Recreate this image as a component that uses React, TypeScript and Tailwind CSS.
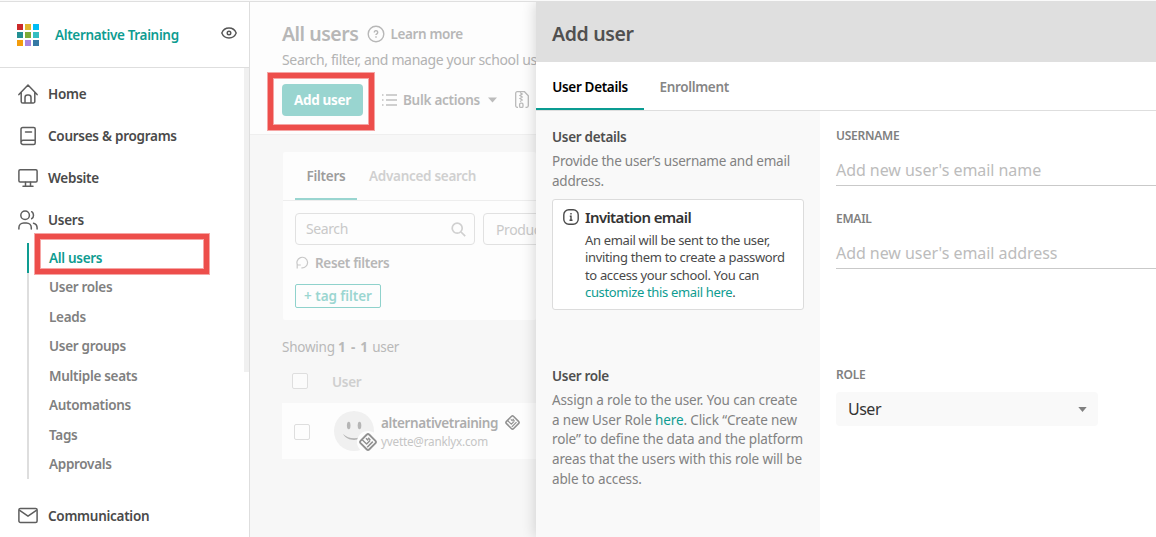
import React from "react";

const NAV = "flex h-[42px] items-center pl-[18px] gap-[10px] text-[13.500px] font-semibold text-[#4a4a4a] tracking-[-0.27px]";

const HomeIcon = () => (
  <svg width="20" height="20" viewBox="0 0 20 20" fill="none" stroke="#5e5e5e" strokeWidth="1.500" strokeLinecap="round" strokeLinejoin="round">
    <path d="M.9 10.600 10 1.100l9.100 9.500M3.200 8.600V17.400a1.600 1.600 0 0 0 1.600 1.600h10.400a1.600 1.600 0 0 0 1.600-1.600V8.600M7 19v-5.600a2.400 2.400 0 0 1 2.400-2.400h1.200a2.400 2.400 0 0 1 2.400 2.400V19" />
  </svg>
);
const BookIcon = () => (
  <svg width="20" height="20" viewBox="0 0 20 20" fill="none" stroke="#5e5e5e" strokeWidth="1.500" strokeLinecap="round">
    <path d="M3 16.200V3.300A1.800 1.800 0 0 1 4.800 1.500H15.700a1.500 1.500 0 0 1 1.500 1.500V17a1.500 1.500 0 0 1-1.500 1.500H5a2 2 0 0 1-2-2.200 2 2 0 0 1 2-2H17M7.500 6h6" />
  </svg>
);
const MonitorIcon = () => (
  <svg width="20" height="20" viewBox="0 0 20 20" fill="none" stroke="#5e5e5e" strokeWidth="1.500" strokeLinecap="round">
    <rect x=".9" y="1.800" width="18.200" height="12.200" rx="1.200" />
    <path d="M7.500 14.200v3.600M12.500 14.200v3.600M5 18.200h10" />
  </svg>
);
const UsersIcon = () => (
  <svg width="20" height="20" viewBox="0 0 20 20" fill="none" stroke="#5e5e5e" strokeWidth="1.500" strokeLinecap="round">
    <circle cx="7.100" cy="5.300" r="4.300" />
    <path d="M13.700 1.700a4.300 4.300 0 0 1 0 7M.9 18.900v-1.200a4.800 4.800 0 0 1 4.800-4.800h2.800a4.800 4.800 0 0 1 4.800 4.800v1.200M15.500 13.200a4.800 4.800 0 0 1 3.600 4.500v1.200" />
  </svg>
);
const MailIcon = () => (
  <svg width="20" height="20" viewBox="0 0 20 20" fill="none" stroke="#5e5e5e" strokeWidth="1.500" strokeLinejoin="round">
    <rect x=".9" y="2.500" width="18.200" height="14" rx="1.500" />
    <path d="m1.300 4.200 8.700 6 8.700-6" />
  </svg>
);
const EyeIcon = () => (
  <svg width="16" height="12" viewBox="0 0 16 12" fill="none" stroke="#555" strokeWidth="1.400">
    <path d="M.8 6C2 3 4.800 1 8 1s6 2 7.200 5C14 9 11.200 11 8 11S2 9 .8 6Z" />
    <circle cx="8" cy="6" r="1.800" />
  </svg>
);
const Diamond = ({ size }: { size: number }) => (
  <svg width={size} height={size} viewBox="0 0 18 18" fill="none" stroke="#919191" strokeWidth="1.900" strokeLinejoin="round">
    <path d="M7.900 1.500a1.500 1.500 0 0 1 2.200 0l6.400 6.400a1.500 1.500 0 0 1 0 2.200l-6.400 6.400a1.500 1.500 0 0 1-2.200 0L1.500 10.100a1.500 1.500 0 0 1 0-2.200Z" />
    <path d="M3.200 6.800 7.600 11 11.300 7.300M7 5.200 9.200 7.400M8.200 14.200 13.800 8.600M9.200 4.700 11.300 7.300" strokeWidth="1.500" />
  </svg>
);

const LOGO = ["bg-[#cb2a2a]", "bg-[#e0b62e]", "bg-[#00bdf5]", "bg-[#239093]", "bg-[#7cab37]", "bg-[#35bec0]", "bg-[#f39c0c]", "bg-[#a884e0]", "bg-[#3578a4]"];
const SUB = ["User roles", "Leads", "User groups", "Multiple seats", "Automations", "Tags", "Approvals"];

function NavItem({ icon, label }: { icon: React.ReactNode; label: string }) {
  return (
    <div className={NAV}>
      {icon}
      <span className="pt-[1px]">{label}</span>
    </div>
  );
}

function Sidebar() {
  return (
    <aside className="flex w-[250px] shrink-0 flex-col border-r border-[#dedede] bg-white">
      <div className="flex h-[66px] shrink-0 items-center border-b border-[#dedede] pl-[17px] pr-[12px]">
        <div className="grid grid-cols-3 gap-[2px]">
          {LOGO.map((c) => (
            <span key={c} className={`size-[6px] ${c}`} />
          ))}
        </div>
        <span className="ml-[16px] mt-[2px] text-[13.500px] font-semibold tracking-[-0.34px] text-[#0e9c91]">Alternative Training</span>
        <span className="ml-auto mb-[3px]"><EyeIcon /></span>
      </div>
      <div className="flex grow">
        <nav className="grow pt-[5px]">
          <NavItem icon={<HomeIcon />} label="Home" />
          <NavItem icon={<BookIcon />} label="Courses &amp; programs" />
          <NavItem icon={<MonitorIcon />} label="Website" />
          <NavItem icon={<UsersIcon />} label="Users" />
          <ul className="ml-[27px] mt-[2px] text-[13.500px] font-semibold tracking-[-0.3px] text-[#808080]">
            <li className="flex h-[29.500px] items-center border-l-2 border-[#0e9c91] pl-[20px] pt-[1px] text-[#0e9c91]">All users</li>
            {SUB.map((s) => (
              <li key={s} className="flex h-[29.500px] items-center border-l-2 border-[#dedede] pl-[20px] pt-[0.500px]">{s}</li>
            ))}
          </ul>
          <div className="mt-[16px]"><NavItem icon={<MailIcon />} label="Communication" /></div>
        </nav>
        <div className="h-[304px] w-[5px] bg-[#f0f0f0]" />
      </div>
    </aside>
  );
}

function UsersPage() {
  return (
    <main className="flex w-[286px] shrink-0 flex-col overflow-hidden bg-[#f7f7f7] whitespace-nowrap">
      <header className="flex h-[133px] shrink-0 flex-col border-b border-[#efefef] bg-[#fdfdfd] pl-[32px] pt-[18px]">
        <div className="flex h-[28px] items-center">
          <h1 className="w-[76px] text-[19.500px] font-semibold tracking-[-0.5px] text-[#b7b7b7]">All users</h1>
          <svg className="ml-[9px] mb-[1px]" width="18" height="18" viewBox="0 0 18 18" fill="none" stroke="#b7b7b7" strokeWidth="1.400">
            <circle cx="9" cy="9" r="7.800" />
            <path d="M7.300 7.400a1.700 1.700 0 1 1 2.600 1.400c-.6.400-.9.600-.9 1.200M9 11.200v1.500" />
          </svg>
          <span className="ml-[5.500px] text-[13.500px] font-semibold tracking-[-0.36px] text-[#b7b7b7]">Learn more</span>
        </div>
        <p className="mt-[2px] h-[20px] text-[14px] leading-[20px] tracking-[-0.35px] text-[#b3b3b3]">Search, filter, and manage your school us</p>
        <div className="mt-[14px] flex h-[32px] items-center">
          <button className="h-[32px] w-[81px] shrink-0 rounded-[4px] bg-[#99d5d0] text-[13.500px] font-bold tracking-[-0.300px] text-white">Add user</button>
          <svg className="ml-[19px] shrink-0" width="15" height="12" viewBox="0 0 15 12" stroke="#c0c0c0" strokeWidth="1.600">
            <path d="M4 1h11M4 6h11M4 11h11M0 1h1.500M0 6h1.500M0 11h1.500" />
          </svg>
          <span className="ml-[6px] text-[13.500px] font-semibold tracking-[-0.28px] text-[#b7b7b7]">Bulk actions</span>
          <svg className="ml-[8px] shrink-0" width="9" height="6" viewBox="0 0 9 6"><path d="M0 .5h9L4.500 5.500Z" fill="#bcbcbc" /></svg>
          <svg className="ml-[18px] shrink-0" width="14" height="18" viewBox="0 0 14 18" fill="none" stroke="#b9b9b9" strokeWidth="1.300">
            <path d="M3 16.300H2.200A1.500 1.500 0 0 1 .7 14.800V2.200A1.500 1.500 0 0 1 2.200.7H9.500l3.800 4v10.100a1.500 1.500 0 0 1-1.500 1.500H10.500" />
            <path d="m5 1.500 2.200 1.500L5 4.500l2.200 1.500L5 7.500l2.200 1.500L5 10.500" />
            <rect x="4.600" y="12.200" width="3.400" height="4.200" rx="1.200" />
          </svg>
        </div>
      </header>
      <section className="ml-[33px] mt-[17px] flex h-[168px] shrink-0 flex-col rounded-[2px] bg-[#fdfdfd]">
        <div className="flex h-[49px] border-b border-[#ededed] pl-[12px] text-[13.500px] font-semibold leading-[48px]">
          <span className="h-[48px] w-[62px] border-b-2 border-[#99d5d0] text-center tracking-[-0.25px] text-[#9c9c9c]">Filters</span>
          <span className="ml-[12px] tracking-[-0.29px] text-[#d0d0d0]">Advanced search</span>
        </div>
        <div className="ml-[12px] mt-[12px] flex h-[32px] shrink-0 gap-[8px] text-[14px] tracking-[-0.4px] text-[#c9c9c9]">
          <div className="flex w-[180px] shrink-0 items-center justify-between rounded-[4px] border border-[#e1e1e1] pl-[10px] pr-[8px]">
            <span className="pb-[1px]">Search</span>
            <svg width="15" height="15" viewBox="0 0 15 15" fill="none" stroke="#d0d0d0" strokeWidth="1.700"><circle cx="6.200" cy="6.200" r="5" /><path d="m10 10 4.200 4.200" /></svg>
          </div>
          <div className="flex w-[180px] shrink-0 items-center rounded-[4px] border border-[#e1e1e1] pl-[12px]">Product</div>
        </div>
        <div className="ml-[13px] mt-[8px] flex h-[20px] items-center text-[13.500px] font-semibold tracking-[-0.33px] text-[#b7b7b7]">
          <svg className="mb-[2px]" width="13" height="13" viewBox="0 0 13 13" fill="none" stroke="#c8c8c8" strokeWidth="1.200"><path d="M1.900 9.600A5.300 5.300 0 1 1 5.400 11.800M1.200 12.500V9h3.600" /></svg>
          <span className="ml-[6px] pt-[1px]">Reset filters</span>
        </div>
        <button className="ml-[12px] mt-[11px] h-[24px] w-[86px] rounded-[2px] border border-[#8fd2cc] text-[13.500px] font-semibold leading-[22px] tracking-[-0.05px] text-[#9bd6d1]">+ tag filter</button>
      </section>
      <p className="ml-[32px] mt-[17px] h-[20px] text-[13.500px] leading-[20px] tracking-[-0.23px] text-[#b9b9b9]">
        Showing <b className="font-bold tracking-[0.800px]">1 - 1</b> user
      </p>
      <div className="ml-[42px] mt-[14px] flex h-[20px] items-center">
        <span className="size-[16px] rounded-[2px] border border-[#dedede] bg-[#fbfbfb]" />
        <span className="ml-[24px] pt-[2px] text-[13.500px] font-semibold tracking-[-0.3px] text-[#cfcfcf]">User</span>
      </div>
      <div className="ml-[32px] mt-[12px] flex h-[56px] shrink-0 items-center bg-[#fdfdfd] pl-[12px]">
        <span className="mt-[2px] size-[16px] shrink-0 rounded-[2px] border border-[#dedede] bg-[#fdfdfd]" />
        <div className="relative ml-[24px] size-[40px] shrink-0 rounded-full bg-[#f0f0f0]">
          <svg width="40" height="40" viewBox="0 0 40 40" fill="#b5b5b5">
            <ellipse cx="14.700" cy="14.500" rx="1.800" ry="3.800" />
            <ellipse cx="25.500" cy="14.500" rx="1.800" ry="3.800" />
            <path d="M9 23c5.500 5.200 14.500 5.700 22 1-5.500 6.500-17 7-22-1Z" />
          </svg>
          <span className="absolute left-[23px] top-[20px] flex size-[22px] items-center justify-center rounded-full bg-[#fdfdfd]"><Diamond size={18} /></span>
        </div>
        <div className="ml-[7px] pt-[2px]">
          <div className="flex h-[18px] items-center text-[13.500px] font-semibold tracking-[-0.38px] text-[#adadad]">
            alternativetraining <span className="mb-[2px] ml-[7px]"><Diamond size={15} /></span>
          </div>
          <div className="h-[17px] text-[11.700px] leading-[17px] tracking-[-0.2px] text-[#c5c5c5]">yvette@ranklyx.com</div>
        </div>
      </div>
    </main>
  );
}

const LABEL = "text-[12px] leading-[16px] font-semibold tracking-[-0.25px] text-[#808080]";
const FIELD = "h-[32px] border-b border-[#c9c9c9] text-[16px] leading-[32px] tracking-[-0.05px] text-[#bcbcbc]";

function AddUserPanel() {
  return (
    <section className="z-10 flex grow flex-col bg-white whitespace-nowrap shadow-[-2px_0_12px_rgba(0,0,0,0.14)]">
      <h2 className="h-[60px] shrink-0 bg-[#dfdfdf] pl-[16px] text-[19.500px] font-semibold leading-[64px] tracking-[-0.36px] text-[#505050]">Add user</h2>
      <div className="flex h-[49px] shrink-0 border-b border-[#dedede] text-[13.500px] font-semibold leading-[50px]">
        <span className="h-[48px] w-[108px] border-b-2 border-[#0a9c92] text-center tracking-[-0.33px] text-black">User Details</span>
        <span className="ml-[15.500px] tracking-[-0.33px] text-[#868686]">Enrollment</span>
      </div>
      <div className="flex grow">
        <div className="w-[284px] shrink-0 bg-[#f9f9f9] pl-[16px] pt-[16px] text-[13.500px] text-[#828282]">
          <h3 className="h-[20px] font-semibold leading-[20px] tracking-[-0.3px] text-[#4f4f4f]">User details</h3>
          <p className="mt-[5px] leading-[19.500px] tracking-[-0.22px]">Provide the user’s username and email<br />address.</p>
          <div className="mt-[8px] flex h-[111px] w-[252px] rounded-[3px] border border-[#dcdcdc] bg-white pl-[10px] pt-[8px]">
            <svg className="mt-[1px] shrink-0" width="16" height="16" viewBox="0 0 16 16" fill="none" stroke="#4a4a4a" strokeWidth="1.400"><rect x=".8" y=".8" width="14.400" height="14.400" rx="5" /><path d="M8 4v1.600M6.800 7.300H8v3.900M6.500 11.300h3" /></svg>
            <div className="ml-[6px]">
              <h4 className="h-[20px] text-[15px] font-semibold leading-[19px] tracking-[-0.62px] text-[#333]">Invitation email</h4>
              <p className="mt-[4px] text-[13px] leading-[17.300px] tracking-[-0.34px] text-[#4a4a4a]">
                An email will be sent to the user,<br />inviting them to create a password<br />to access your school. You can<br />
                <span className="text-[#0e9c91]">customize this email here</span>.
              </p>
            </div>
          </div>
          <h3 className="mt-[56px] h-[20px] font-semibold leading-[20px] tracking-[-0.3px] text-[#4f4f4f]">User role</h3>
          <p className="mt-[5px] leading-[19.700px] tracking-[-0.13px]">
            Assign a role to the user. You can create<br />a new User Role <span className="text-[#0e9c91]">here</span>. Click “Create new<br />role” to define the data and the platform<br />areas that the users with this role will be<br />able to access.
          </p>
        </div>
        <div className="grow pl-[16px] pt-[17px]">
          <div className={LABEL}>USERNAME</div>
          <div className={`${FIELD} mt-[10px]`}>Add new user's email name</div>
          <div className={`${LABEL} mt-[25px]`}>EMAIL</div>
          <div className={`${FIELD} mt-[10px]`}>Add new user's email address</div>
          <div className={`${LABEL} mt-[98px]`}>ROLE</div>
          <div className="mt-[9px] flex h-[34px] w-[262px] items-center justify-between rounded-[4px] bg-[#f9f9f9] pl-[12px] pr-[11px] text-[16px] tracking-[-0.5px] text-[#333]">
            User
            <svg width="9" height="5" viewBox="0 0 9 5"><path d="M.3 0h8.400L4.500 5Z" fill="#808080" /></svg>
          </div>
        </div>
      </div>
    </section>
  );
}

const MARK = "absolute border-[5px] border-[#ed4e4b] shadow-[0_0_0_1px_rgba(237,78,75,0.5),inset_0_0_0_1px_rgba(237,78,75,0.5)]";

export default function App() {
  return (
    <div className="relative flex h-[537px] w-[1156px] flex-col overflow-hidden bg-[#fafafa] pt-px font-['Noto_Sans','Open_Sans',sans-serif]">
      <div className="flex grow overflow-hidden border-t border-[#dfdfdf]">
        <Sidebar />
        <UsersPage />
        <AddUserPanel />
      </div>
      <div className={`${MARK} left-[268px] top-[73px] h-[57px] w-[106px]`} />
      <div className={`${MARK} left-[35px] top-[234px] h-[40px] w-[174px]`} />
    </div>
  );
}
